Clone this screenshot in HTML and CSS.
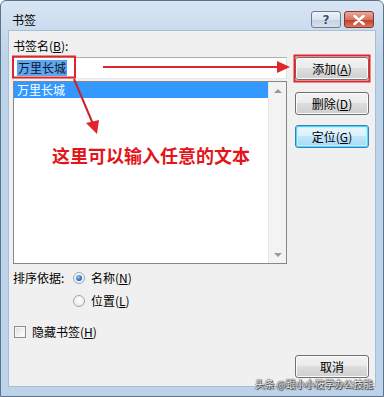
FILE: index.html
```html
<!DOCTYPE html>
<html lang="zh">
<head>
<meta charset="utf-8">
<link rel="stylesheet" href="styles.css">
</head>
<body>
<div class="window">
  <div class="titlebar">
    <span class="title">书签</span>
    <div class="caption-btns">
      <div class="cap-btn help">?</div>
      <div class="cap-btn close">
        <svg width="12" height="10" viewBox="0 0 12 10"><path d="M1.5 1 L10.5 9 M10.5 1 L1.5 9" stroke="#fff" stroke-width="2.6" stroke-linecap="round"/></svg>
      </div>
    </div>
  </div>
  <div class="client">
    <div class="main">
      <div class="left">
        <div class="label">书签名(<u>B</u>):</div>
        <div class="input"><span class="sel">万里长城</span></div>
        <div class="list">
          <div class="items">
            <div class="item selected">万里长城</div>
          </div>
          <div class="scrollbar">
            <div class="arrow up"></div>
            <div class="arrow down"></div>
          </div>
        </div>
        <div class="sort">
          <span class="sort-label">排序依据:</span>
          <label class="radio-row"><span class="radio checked"></span>名称(<u>N</u>)</label>
          <span></span>
          <label class="radio-row second"><span class="radio"></span>位置(<u>L</u>)</label>
        </div>
        <label class="check-row"><span class="checkbox"></span>隐藏书签(<u>H</u>)</label>
      </div>
      <div class="right">
        <div class="btn add">添加(<u>A</u>)</div>
        <div class="btn del">删除(<u>D</u>)</div>
        <div class="btn locate">定位(<u>G</u>)</div>
        <div class="btn cancel">取消</div>
      </div>
    </div>
  </div>

  <svg class="overlay" width="384" height="397" viewBox="0 0 384 397">
    <rect x="13" y="56.5" width="62" height="21" fill="none" stroke="#e0262b" stroke-width="2"/>
    <rect x="294.5" y="55.5" width="75" height="26" fill="none" stroke="#e0262b" stroke-width="2"/>
    <line x1="103" y1="67" x2="279" y2="67" stroke="#e0262b" stroke-width="2"/>
    <polygon points="277,61 290,67 277,73" fill="#e0262b"/>
    <line x1="74" y1="79" x2="93" y2="124" stroke="#c8242a" stroke-width="2"/>
    <polygon points="86,123 99,120 97,134" fill="#e0262b"/>
  </svg>
  <div class="note">这里可以输入任意的文本</div>
  <div class="watermark">头条 @跟小小筱学办公技能</div>
</div>
</body>
</html>
```
FILE: styles.css
```css
* { box-sizing: border-box; }
html, body { margin: 0; padding: 0; }
body {
  width: 384px;
  height: 397px;
  overflow: hidden;
  font-family: "Noto Sans CJK SC", "Noto Sans", sans-serif;
  font-size: 12px;
  color: #000;
  background: #fff;
}
u { text-decoration: underline; text-underline-offset: 1px; }

.window {
  position: relative;
  width: 384px;
  height: 397px;
  border: 1px solid #5d7189;
  border-radius: 6px 6px 0 0;
  background: linear-gradient(to bottom, #d8e5f3 0px, #c9dbee 30px, #bcd3ea 60px, #bcd3ea 100%);
  display: flex;
  flex-direction: column;
}

.titlebar {
  height: 29px;
  display: flex;
  align-items: flex-start;
  padding-left: 11px;
}
.title {
  margin-top: 11px;
  line-height: 16px;
  font-size: 12px;
}
.caption-btns {
  margin-left: auto;
  margin-right: 9px;
  margin-top: 10px;
  display: flex;
  gap: 3px;
}
.cap-btn {
  width: 30px;
  height: 17px;
  border: 1px solid #6b7c90;
  border-radius: 3px;
  display: flex;
  align-items: center;
  justify-content: center;
}
.cap-btn.help {
  background: linear-gradient(to bottom, #eef3f9 0%, #dae4ef 50%, #c3d1e1 51%, #d6e1ee 100%);
  color: #3c4f66;
  font-family: "DejaVu Sans", sans-serif;
  font-weight: bold;
  font-size: 12px;
  text-shadow: 0 0 2px #fff;
}
.cap-btn.close {
  border-color: #7a3a3a;
  background: linear-gradient(to bottom, #e9a99b 0%, #d8745f 50%, #c43c22 51%, #d87a5f 100%);
}

.client {
  flex: 1;
  margin: 0 7px 9px 7px;
  background: #f0f0f0;
  border: 1px solid #a9bdd3;
}

.main {
  display: flex;
  height: 100%;
  padding-left: 4px;
  gap: 8px;
}

.left {
  width: 274px;
  display: flex;
  flex-direction: column;
}
.label {
  margin-top: 7px;
  line-height: 16px;
}
.input {
  margin-top: 3px;
  height: 22px;
  background: #fff;
  border: 1px solid #abadb3;
  border-color: #abadb3 #dbdfe6 #e3e9ef #e2e3ea;
  padding: 2px 0 0 3px;
  line-height: 16px;
}
.sel {
  background: #5ea6ee;
  color: #0b1630;
  padding: 0 1px;
  display: inline-block;
  line-height: 16px;
}
.list {
  margin-top: 2px;
  height: 183px;
  background: #fff;
  border: 1px solid #828790;
  display: flex;
}
.items {
  flex: 1;
  padding-top: 0px;
}
.item {
  height: 16px;
  line-height: 16px;
  padding-left: 3px;
}
.item.selected {
  background: #3399ff;
  color: #fff;
}
.scrollbar {
  width: 18px;
  background: #f3f3f3;
  border-left: 1px solid #e6e6e6;
  display: flex;
  flex-direction: column;
  justify-content: space-between;
  padding: 5px 0 6px 0;
  align-items: center;
}
.arrow {
  width: 0;
  height: 0;
  border-left: 4px solid transparent;
  border-right: 4px solid transparent;
}
.arrow.up { border-bottom: 4px solid #9a9a9a; margin-top: 2px; }
.arrow.down { border-top: 4px solid #9a9a9a; }

.sort {
  margin-top: 6px;
  display: grid;
  grid-template-columns: 60px auto;
  row-gap: 7px;
  line-height: 16px;
}
.radio-row, .check-row {
  display: flex;
  align-items: center;
  line-height: 16px;
}
.radio {
  width: 12px;
  height: 12px;
  border-radius: 50%;
  border: 1px solid #a0a8b3;
  background: radial-gradient(circle at 50% 40%, #ffffff 0%, #e9edf2 70%, #dde3ea 100%);
  margin-right: 6px;
  position: relative;
}
.radio.checked::after {
  content: "";
  position: absolute;
  left: 2px;
  top: 2px;
  width: 6px;
  height: 6px;
  border-radius: 50%;
  background: radial-gradient(circle at 40% 35%, #8fd0ff 0%, #2a6fb5 60%, #1b4f8c 100%);
}
.check-row {
  margin-top: 15px;
}
.checkbox {
  width: 12px;
  height: 12px;
  margin-left: 1px;
  margin-right: 6px;
  border: 1px solid #8f8f8f;
  background: linear-gradient(135deg, #dcdcdc 0%, #f4f4f4 60%, #ffffff 100%);
  box-shadow: inset 0 0 0 1px #f6f6f6;
}

.right {
  width: 74px;
  display: flex;
  flex-direction: column;
  padding-bottom: 8px;
}
.btn {
  height: 23px;
  border: 1px solid #707070;
  border-radius: 3px;
  background: linear-gradient(to bottom, #f2f2f2 0%, #ebebeb 49%, #dddddd 50%, #cfcfcf 100%);
  box-shadow: inset 0 0 0 1px #fbfbfb;
  display: flex;
  align-items: center;
  justify-content: center;
  line-height: 16px;
}
.btn.add { margin-top: 26px; }
.btn.del { margin-top: 12px; }
.btn.locate {
  margin-top: 10px;
  border-color: #3c7fb1;
  box-shadow: inset 0 0 0 1px #48d8fb, inset 0 0 0 2px #c7eefc;
  background: linear-gradient(to bottom, #eaf6fd 0%, #d9f0fc 49%, #bee6fd 50%, #a7d9f5 100%);
}
.btn.cancel { margin-top: auto; }

.overlay {
  position: absolute;
  left: -1px;
  top: -1px;
  pointer-events: none;
}
.note {
  position: absolute;
  left: 51px;
  top: 143px;
  font-size: 18px;
  font-weight: bold;
  line-height: 22px;
  color: #e3151b;
  white-space: nowrap;
  text-shadow: 0 0 2px #fff;
}
.watermark {
  position: absolute;
  left: 254px;
  top: 377px;
  font-size: 9.7px;
  line-height: 12px;
  color: #f4f4f4;
  white-space: nowrap;
  text-shadow: 0 0 1px #222, 0 0 1px #222, 1px 1px 1px #333;
}
```
